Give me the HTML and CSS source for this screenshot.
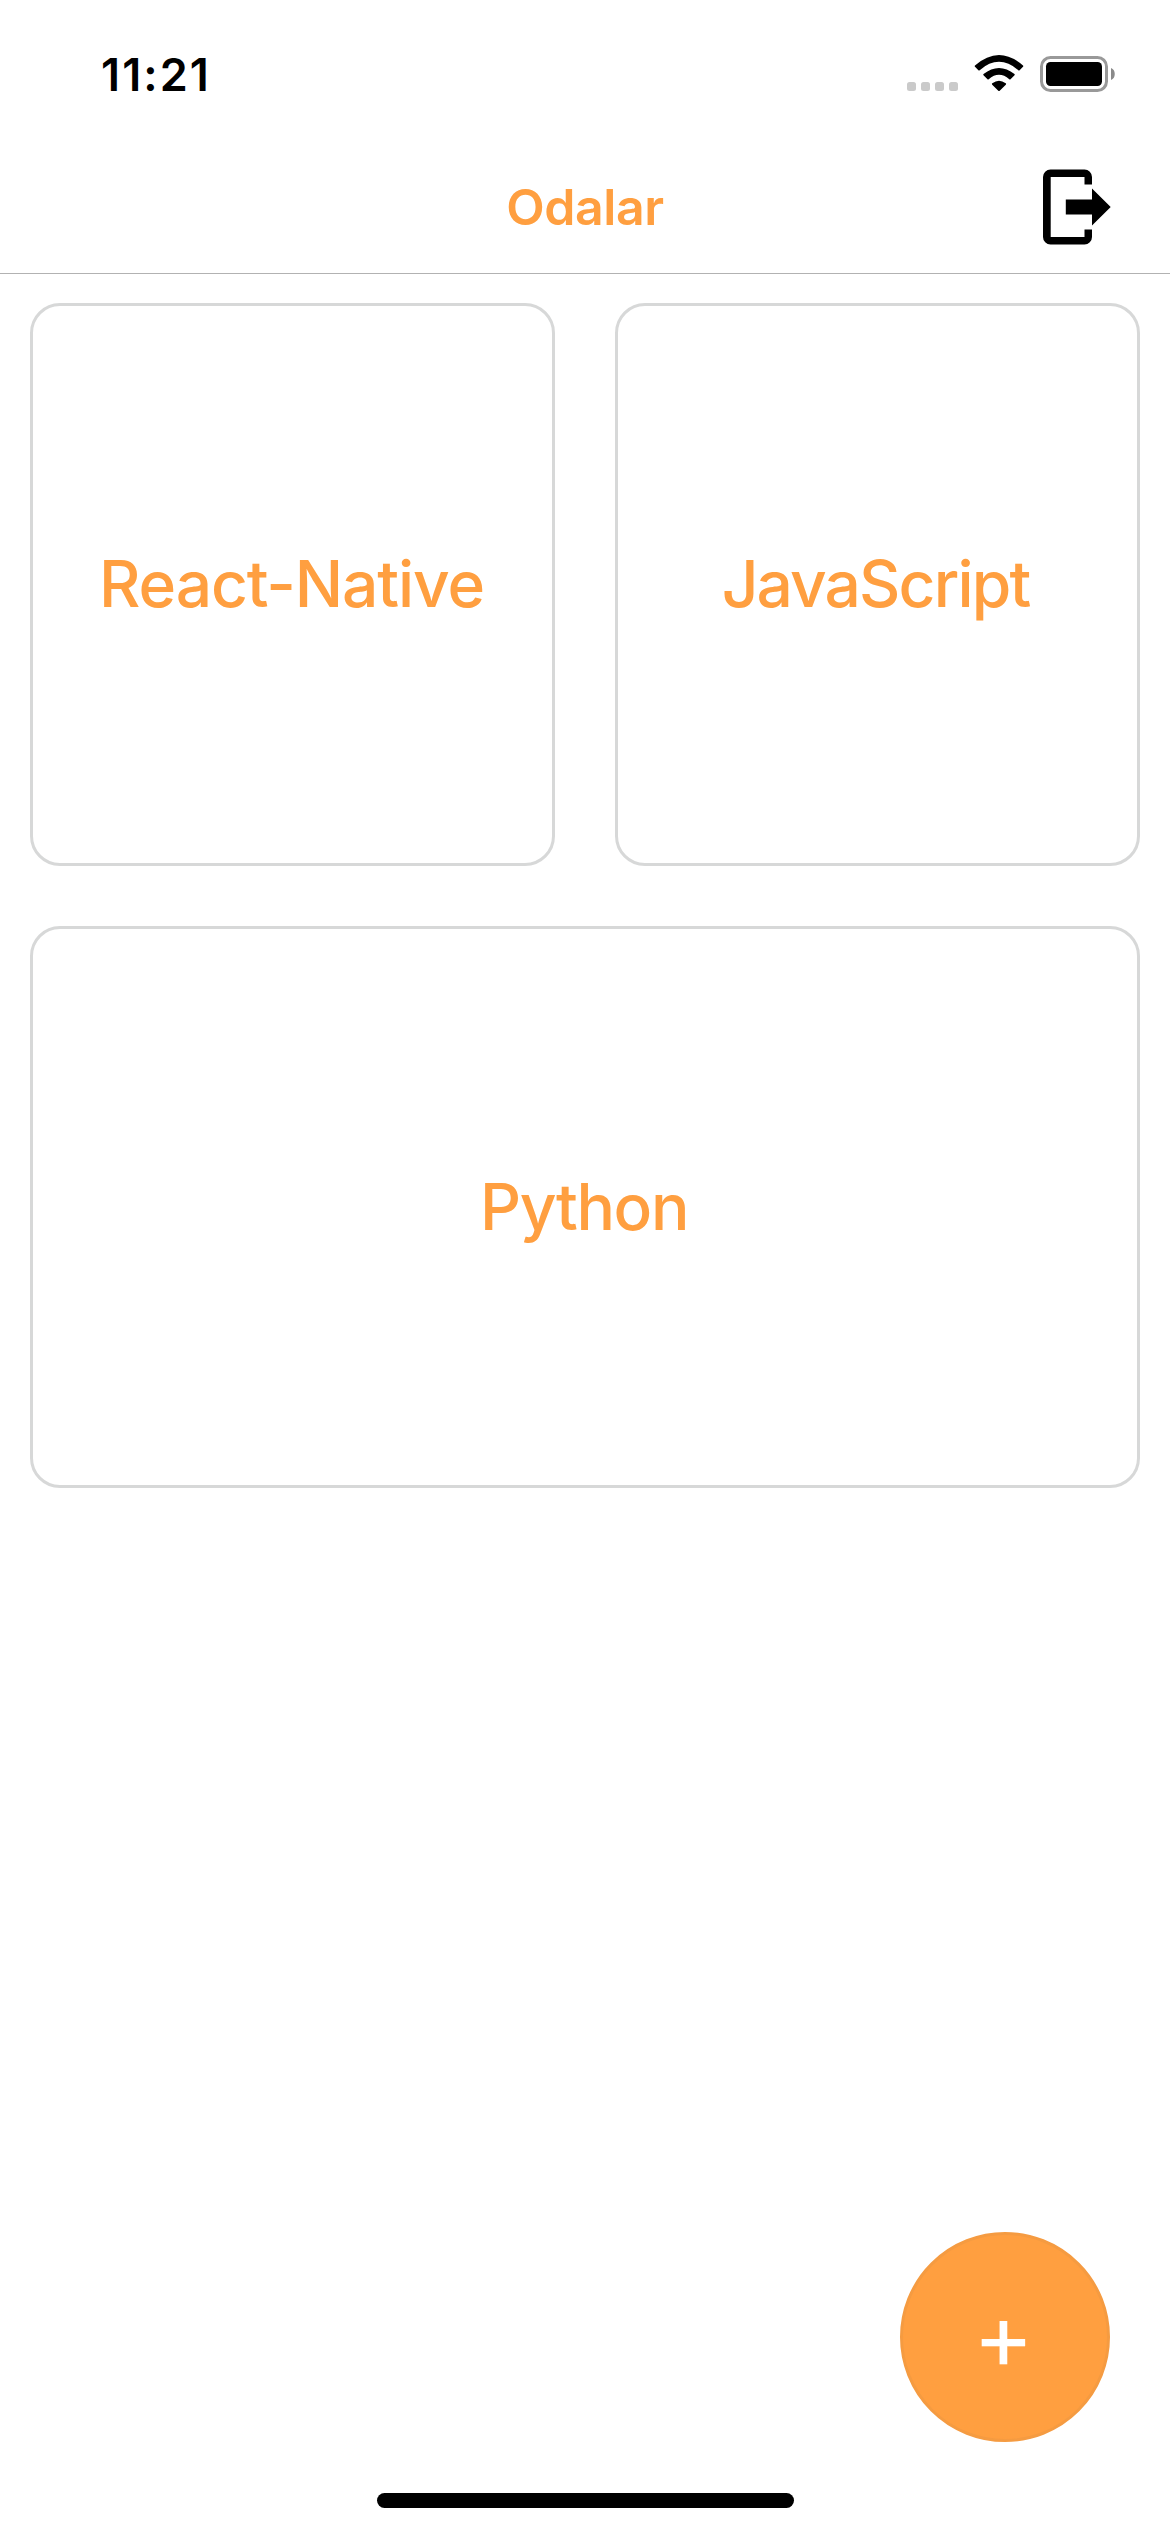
FILE: index.html
```html
<!DOCTYPE html>
<html lang="tr">
<head>
<meta charset="utf-8">
<title>Odalar</title>
<link rel="stylesheet" href="styles.css">
</head>
<body>
<div class="screen">
  <div class="status-bar">
    <span class="time">11:21</span>
    <svg class="status-icons" viewBox="0 0 210 38" aria-hidden="true">
      <g fill="#cacaca">
        <rect x="2" y="27" width="9" height="9" rx="2.5"/>
        <rect x="16" y="27" width="9" height="9" rx="2.5"/>
        <rect x="30" y="27" width="9" height="9" rx="2.5"/>
        <rect x="44" y="27" width="9" height="9" rx="2.5"/>
      </g>
      <path d="M70 10.500Q94 -10.500 118 10.500Q118.600 11.200 118 11.800L114.600 15.200Q114 15.800 113.300 15.200Q94 -1.500 74.700 15.200Q74 15.800 73.400 15.200L70 11.800Q69.400 11.200 70 10.500ZM78.500 19Q94 7 109.500 19Q110 19.600 109.500 20.200L105.500 24.200Q105 24.700 104.300 24.200Q94 15.500 83.700 24.200Q83 24.700 82.500 24.200L78.500 20.200Q78 19.600 78.500 19ZM87.300 28.300Q94 23.200 100.700 28.300Q101.500 29 100.800 29.700L94.700 35.800Q94 36.400 93.300 35.800L87.200 29.700Q86.500 29 87.300 28.300Z"/>
      <rect x="136.500" y="2.500" width="65" height="33" rx="9" fill="none" stroke="#999" stroke-width="3"/>
      <rect x="141" y="7" width="56" height="24" rx="4.500"/>
      <path d="M206 13C211 14.500 211 23.500 206 25Z" fill="#8a8a8a"/>
    </svg>
  </div>
  <header class="header">
    <h1 class="title">Odalar</h1>
    <svg class="logout" viewBox="0 0 68 76" aria-hidden="true">
      <path d="M7.500 .5H41.500A7.500 7.500 0 0 1 49 8V15.500H41.500V8H7.700V68H41.500V60.500H49V68A7.500 7.500 0 0 1 41.500 75.500H7.500A7.500 7.500 0 0 1 0 68V8A7.500 7.500 0 0 1 7.500 .5ZM22.800 30.500H49V19.500L67.700 38L49 56.500V45.500H22.800Z"/>
    </svg>
  </header>
  <main class="rooms">
    <div class="room"><span class="room-name">React-Native</span></div>
    <div class="room"><span class="room-name room-name-js">JavaScript</span></div>
    <div class="room room-wide"><span class="room-name room-name-py">Python</span></div>
  </main>
  <button class="add" aria-label="Oda ekle"><span class="plus">+</span></button>
  <div class="home-indicator"></div>
</div>
</body>
</html>
```
FILE: styles.css
```css
* { box-sizing: border-box; }
body { margin: 0; background: #fff; font-family: Inter, "Liberation Sans", sans-serif; }
.screen { position: relative; width: 1170px; height: 2532px; display: flex; flex-direction: column; overflow: hidden; }
.status-bar { height: 141px; display: flex; justify-content: space-between; align-items: flex-start; padding: 55px 55px 0 101px; }
.time { font-size: 45px; line-height: 40px; font-weight: 600; letter-spacing: 2.1px; color: #000; }
.status-icons { width: 210px; height: 38px; }
.header { height: 133px; display: grid; grid-template-columns: 1fr auto 1fr; align-items: center; padding: 0 59px; border-bottom: 1px solid #b2b2b2; }
.title { grid-column: 2; margin: 0; font-size: 50px; line-height: 60px; font-weight: 600; letter-spacing: -.4px; color: #ff9f40; }
.logout { justify-self: end; width: 68px; height: 76px; }
.rooms { flex: 1; display: grid; grid-template-columns: 1fr 1fr; grid-template-rows: 563px 562px; gap: 60px; padding: 29px 30px; }
.room { display: flex; align-items: center; justify-content: center; border: 3px solid #d7d8d8; border-radius: 30px; }
.room-wide { grid-column: span 2; }
.room-name { padding: 0 2px 2px 0; font-size: 64px; line-height: 78px; font-weight: 500; letter-spacing: -1.1px; color: #ff9f40; }
.room-name-js { padding-right: 4px; letter-spacing: -1.85px; }
.room-name-py { padding-bottom: 0; letter-spacing: -1.4px; }
.add { position: absolute; right: 60px; bottom: 90px; width: 210px; height: 210px; padding: 0 3px 3px 0; display: flex; align-items: center; justify-content: center; border: 3px solid #f59b41; border-radius: 50%; background: #ff9f40; font-family: inherit; color: #fff; }
.plus { font-size: 92px; line-height: 90px; font-weight: 400; }
.home-indicator { align-self: center; width: 417px; height: 15px; margin-bottom: 24px; border-radius: 8px; background: #000; }
```
